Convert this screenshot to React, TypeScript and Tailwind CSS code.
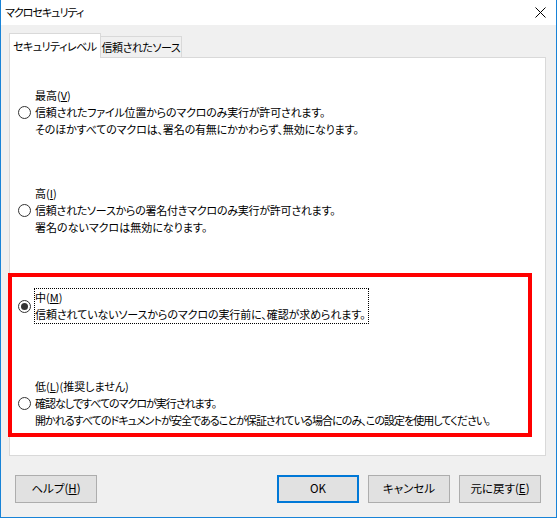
import React from "react";

const font = {
  fontFamily: '"Noto Sans CJK JP", "Noto Sans", sans-serif',
};

function Radio({ checked }: { checked?: boolean }) {
  return (
    <div className="w-[13px] h-[13px] shrink-0 rounded-full border border-[#333333] bg-white flex items-center justify-center">
      {checked && <div className="w-[7px] h-[7px] rounded-full bg-[#333333]" />}
    </div>
  );
}

type Line = { t: string; c: string };

function Option({
  label,
  accel,
  suffix,
  lines,
  checked,
  className,
}: {
  label: string;
  accel: string;
  suffix?: string;
  lines: Line[];
  checked?: boolean;
  className?: string;
}) {
  return (
    <div className={"flex items-center " + (className ?? "")}>
      <Radio checked={checked} />
      <div
        className={
          "ml-[3px] border leading-[17px] pr-[2px] whitespace-nowrap " +
          (checked ? "border-dotted border-black" : "border-transparent")
        }
      >
        <div>
          {label}(<span className="underline">{accel}</span>){suffix}
        </div>
        {lines.map((l, i) => (
          <div key={i} className={l.c}>
            {l.t}
          </div>
        ))}
      </div>
    </div>
  );
}

function Btn({
  children,
  primary,
  className,
}: {
  children: React.ReactNode;
  primary?: boolean;
  className?: string;
}) {
  return (
    <div
      className={
        "w-[82px] h-[28px] flex items-center justify-center bg-[#e1e1e1] text-[11.5px] text-black " +
        (primary ? "border-2 border-[#0078d7]" : "border border-[#adadad]") +
        " " +
        (className ?? "")
      }
    >
      {children}
    </div>
  );
}

export default function App() {
  return (
    <div
      className="relative w-[557px] h-[518px] bg-[#f0f0f0] border-l border-r border-b border-[#1883d7] text-[11px] text-black [font-feature-settings:'palt']"
      style={font}
    >
      {/* Title bar */}
      <div className="h-[25px] bg-white flex items-center justify-between pl-[4px] pr-[9px]">
        <span className="text-[11px] leading-none tracking-[-1px]">マクロセキュリティ</span>
        <svg width="11" height="11" viewBox="0 0 11 11" className="mr-[1px]">
          <path d="M0.5 0.5 L10.5 10.5 M10.5 0.5 L0.5 10.5" stroke="#000" strokeWidth="1" />
        </svg>
      </div>

      {/* Body */}
      <div className="pt-[8px] pl-[8px]">
        {/* Tabs */}
        <div className="flex items-end relative z-10 -mb-[1px]">
          <div className="h-[25px] px-[3px] bg-white border border-b-0 border-[#d9d9d9] flex items-center leading-none tracking-[-0.5px]">
            セキュリティレベル
          </div>
          <div className="h-[21px] px-[1px] border-t border-r border-[#d9d9d9] bg-[#f0f0f0] flex items-center leading-none mb-[1px] tracking-[-0.5px]">
            信頼されたソース
          </div>
        </div>

        {/* Panel */}
        <div className="w-[537px] h-[399px] bg-white border border-[#d9d9d9] pt-[28px] pl-[8px] flex flex-col">
          <Option
            label="最高"
            accel="V"
            lines={[
              { t: "信頼されたファイル位置からのマクロのみ実行が許可されます。", c: "tracking-[-0.2px]" },
              { t: "そのほかすべてのマクロは、署名の有無にかかわらず、無効になります。", c: "tracking-[-0.15px]" },
            ]}
          />
          <Option
            className="mt-[45px]"
            label="高"
            accel="I"
            lines={[
              { t: "信頼されたソースからの署名付きマクロのみ実行が許可されます。", c: "tracking-[-0.25px]" },
              { t: "署名のないマクロは無効になります。", c: "" },
            ]}
          />
          <Option
            className="mt-[51px]"
            label="中"
            accel="M"
            checked
            lines={[{ t: "信頼されていないソースからのマクロの実行前に、確認が求められます。", c: "tracking-[-0.1px]" }]}
          />
          <Option
            className="mt-[53px]"
            label="低"
            accel="L"
            suffix="(推奨しません)"
            lines={[
              { t: "確認なしですべてのマクロが実行されます。", c: "tracking-[-1px]" },
              {
                t: "開かれるすべてのドキュメントが安全であることが保証されている場合にのみ、この設定を使用してください。",
                c: "tracking-[-0.95px]",
              },
            ]}
          />
        </div>

        {/* Buttons */}
        <div className="flex mt-[19px] pl-[6px]">
          <Btn>
            <span>
              ヘルプ(<span className="underline">H</span>)
            </span>
          </Btn>
          <div className="flex gap-[9px] ml-[180px]">
            <Btn primary>OK</Btn>
            <Btn>キャンセル</Btn>
            <Btn>
              <span>
                元に戻す(<span className="underline">E</span>)
              </span>
            </Btn>
          </div>
        </div>
      </div>

      {/* Red annotation box */}
      <div className="absolute left-[7px] top-[273px] w-[524px] h-[164px] border-4 border-[#ff0000] pointer-events-none" />
    </div>
  );
}
